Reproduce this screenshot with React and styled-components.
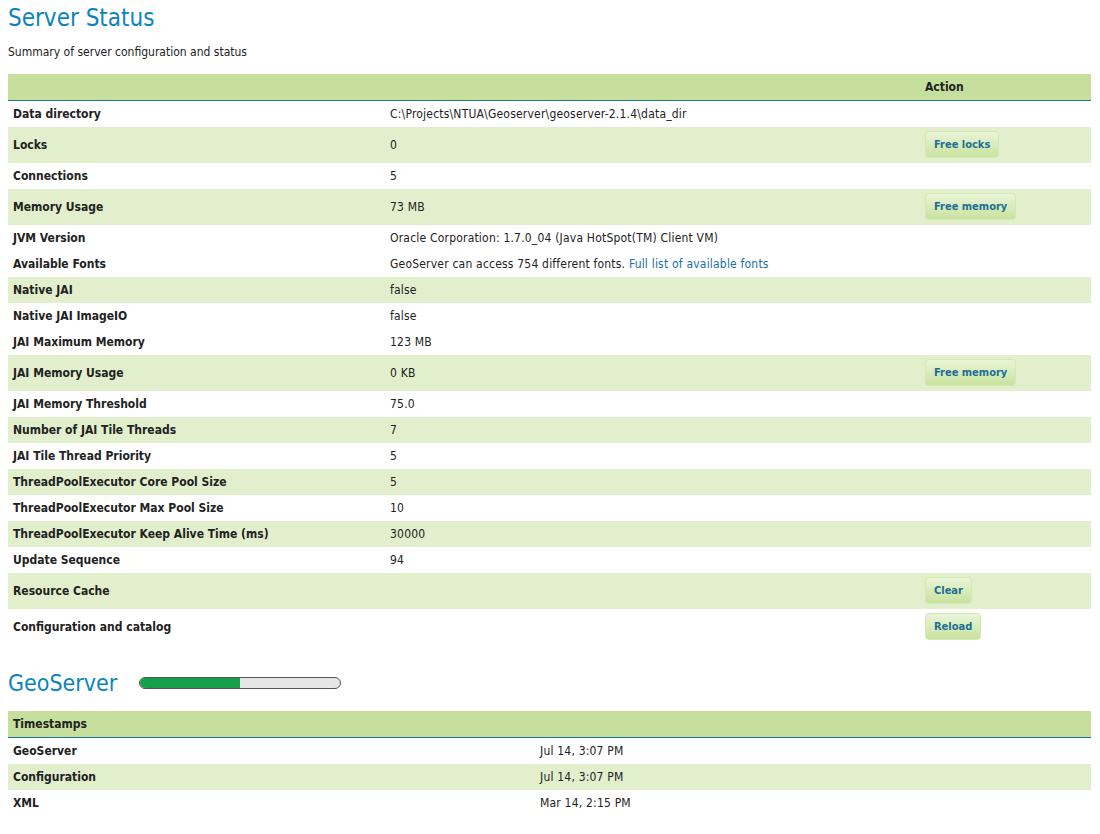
import styled, { createGlobalStyle } from "styled-components";

const GlobalStyle = createGlobalStyle`
  body {
    margin: 0;
    background: #fff;
    font-family: "DejaVu Sans Condensed", "DejaVu Sans", sans-serif;
    font-size: 12px;
    color: #222;
  }
`;

const statusRows = [
  { label: "Data directory", value: "C:\\Projects\\NTUA\\Geoserver\\geoserver-2.1.4\\data_dir" },
  { label: "Locks", value: "0", action: "Free locks", shaded: true },
  { label: "Connections", value: "5" },
  { label: "Memory Usage", value: "73 MB", action: "Free memory", shaded: true },
  { label: "JVM Version", value: "Oracle Corporation: 1.7.0_04 (Java HotSpot(TM) Client VM)" },
  { label: "Available Fonts", value: "GeoServer can access 754 different fonts. ", link: "Full list of available fonts" },
  { label: "Native JAI", value: "false", shaded: true },
  { label: "Native JAI ImageIO", value: "false" },
  { label: "JAI Maximum Memory", value: "123 MB" },
  { label: "JAI Memory Usage", value: "0 KB", action: "Free memory", shaded: true },
  { label: "JAI Memory Threshold", value: "75.0" },
  { label: "Number of JAI Tile Threads", value: "7", shaded: true },
  { label: "JAI Tile Thread Priority", value: "5" },
  { label: "ThreadPoolExecutor Core Pool Size", value: "5", shaded: true },
  { label: "ThreadPoolExecutor Max Pool Size", value: "10" },
  { label: "ThreadPoolExecutor Keep Alive Time (ms)", value: "30000", shaded: true },
  { label: "Update Sequence", value: "94" },
  { label: "Resource Cache", value: "", action: "Clear", shaded: true },
  { label: "Configuration and catalog", value: "", action: "Reload" },
];

const stampRows = [
  { label: "GeoServer", value: "Jul 14, 3:07 PM" },
  { label: "Configuration", value: "Jul 14, 3:07 PM", shaded: true },
  { label: "XML", value: "Mar 14, 2:15 PM" },
];

const App = () => {
  return (
    <Page>
      <GlobalStyle />
      <Title>Server Status</Title>
      <Summary>Summary of server configuration and status</Summary>
      <Table>
        <colgroup>
          <Col $width="377px" />
          <Col $width="535px" />
          <Col />
        </colgroup>
        <thead>
          <tr>
            <Th></Th>
            <Th></Th>
            <Th>Action</Th>
          </tr>
        </thead>
        <tbody>
          {statusRows.map((row) => (
            <Row key={row.label} $shaded={row.shaded}>
              <Label>{row.label}</Label>
              <Td>
                {row.value}
                {row.link && <Link href="#">{row.link}</Link>}
              </Td>
              <Td>{row.action && <ActionButton>{row.action}</ActionButton>}</Td>
            </Row>
          ))}
        </tbody>
      </Table>

      <SectionHead>
        <SubTitle>GeoServer</SubTitle>
        <Progress>
          <ProgressFill style={{ width: "50%" }} />
        </Progress>
      </SectionHead>

      <Table>
        <colgroup>
          <Col $width="527px" />
          <Col />
        </colgroup>
        <thead>
          <tr>
            <Th>Timestamps</Th>
            <Th></Th>
          </tr>
        </thead>
        <tbody>
          {stampRows.map((row) => (
            <Row key={row.label} $shaded={row.shaded}>
              <Label>{row.label}</Label>
              <Td>{row.value}</Td>
            </Row>
          ))}
        </tbody>
      </Table>
    </Page>
  );
};

export default App;

const Page = styled.div`
  padding: 0 9px 0 8px;
`;

const Title = styled.h1`
  margin: 0;
  padding-top: 3px;
  font-size: 24px;
  font-weight: normal;
  color: #0b84bd;
  line-height: 30px;
`;

const SubTitle = styled.h2`
  margin: 0;
  font-size: 23px;
  font-weight: normal;
  color: #0b84bd;
  line-height: 30px;
`;

const Summary = styled.p`
  margin: 12px 0 15px;
  font-size: 12px;
  line-height: 14px;
`;

const Table = styled.table`
  width: 100%;
  table-layout: fixed;
  border-collapse: collapse;
`;

const Col = styled.col`
  width: ${(p) => p.$width || "auto"};
`;

const Th = styled.th`
  height: 26px;
  padding: 0 5px;
  background: #c6df9c;
  border-bottom: 1px solid #1b7a93;
  text-align: left;
  font-weight: bold;
  color: #222;
`;

const Row = styled.tr`
  background: ${(p) => (p.$shaded ? "#e1efcd" : "#fff")};
`;

const Td = styled.td`
  height: 26px;
  padding: 0 5px;
  vertical-align: middle;
  color: #222;
  letter-spacing: 0.2px;
  white-space: nowrap;
`;

const Label = styled(Td)`
  font-weight: bold;
  letter-spacing: 0;
`;

const Link = styled.a`
  color: #1a6fa6;
  text-decoration: none;
`;

const ActionButton = styled.button`
  display: block;
  margin: 4px 0 5px;
  height: 27px;
  padding: 0 8px;
  font-family: inherit;
  font-size: 11px;
  font-weight: bold;
  letter-spacing: 0;
  color: #1b6f96;
  border: 1px solid #d3e8b3;
  border-radius: 4px;
  background: linear-gradient(#eaf5d8, #c8e29e);
  cursor: pointer;
`;

const SectionHead = styled.div`
  display: flex;
  align-items: center;
  gap: 22px;
  margin: 23px 0 13px;
`;

const Progress = styled.div`
  width: 200px;
  height: 10px;
  border: 1px solid #555;
  border-radius: 6px;
  background: #e7e6e7;
  overflow: hidden;
`;

const ProgressFill = styled.div`
  height: 100%;
  background: #14a04a;
`;
